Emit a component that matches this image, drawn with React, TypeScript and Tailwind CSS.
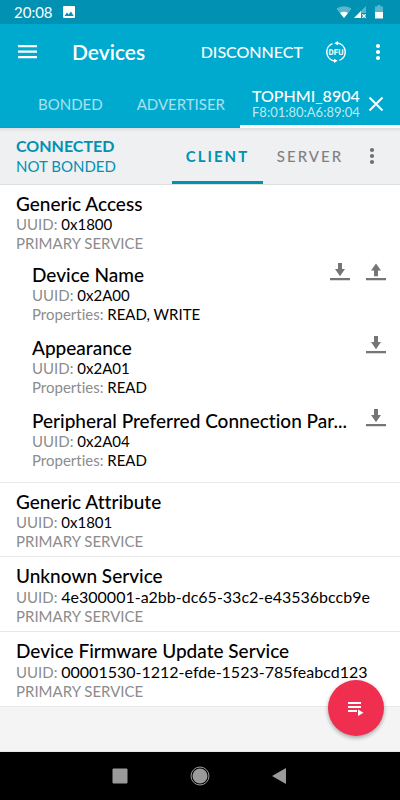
import React from "react";

type Characteristic = { name: string; uuid: string; properties: string; writable?: boolean };
type Service = { name: string; uuid: string; characteristics?: Characteristic[] };

const services: Service[] = [
  {
    name: "Generic Access",
    uuid: "0x1800",
    characteristics: [
      { name: "Device Name", uuid: "0x2A00", properties: "READ, WRITE", writable: true },
      { name: "Appearance", uuid: "0x2A01", properties: "READ" },
      { name: "Peripheral Preferred Connection Par...", uuid: "0x2A04", properties: "READ" },
    ],
  },
  { name: "Generic Attribute", uuid: "0x1801" },
  { name: "Unknown Service", uuid: "4e300001-a2bb-dc65-33c2-e43536bccb9e" },
  { name: "Device Firmware Update Service", uuid: "00001530-1212-efde-1523-785feabcd123" },
];

function DotsIcon() {
  return (
    <svg width="6" height="18" viewBox="0 0 6 18" fill="currentColor" aria-hidden="true">
      <circle cx="3" cy="3" r="2.1" />
      <circle cx="3" cy="9" r="2.1" />
      <circle cx="3" cy="15" r="2.1" />
    </svg>
  );
}

function ReadIcon() {
  return (
    <svg width="20" height="18" viewBox="0 0 20 18" fill="currentColor" aria-hidden="true">
      <path d="M8 0h4v6h3l-5 7.3L5 6h3zM0 15h20v2.2H0z" />
    </svg>
  );
}

function WriteIcon() {
  return (
    <svg width="20" height="18" viewBox="0 0 20 18" fill="currentColor" aria-hidden="true">
      <path d="M8 13.3h4V7.6h3L10 .6 5 7.6h3zM0 15h20v2.2H0z" />
    </svg>
  );
}

function StatusBar() {
  return (
    <div className="flex h-6 items-center bg-[#0091b3] pr-[17px] pl-3.5 text-white">
      <span className="text-[15px] leading-6">20:08</span>
      <svg className="ml-2.5" width="12" height="12" viewBox="0 0 12 12" aria-hidden="true">
        <rect width="12" height="12" rx="1" fill="#fff" />
        <path d="M1.5 10 4 6.6l1.6 2L8 5.5l2.7 4.5z" fill="#0091b3" />
      </svg>
      <span className="flex-1" />
      <svg width="16" height="12" viewBox="0 0 16 12" aria-hidden="true">
        <path d="M8 12 .5 2.8C4.5-.6 11.5-.6 15.5 2.8z" fill="#fff" opacity=".35" />
        <path d="M8 12 4 7c2.4-1.6 5.6-1.6 8 0z" fill="#fff" />
      </svg>
      <svg className="ml-0.5" width="13" height="13" viewBox="0 0 13 13" aria-hidden="true">
        <path d="M0 12 12 0v7H7v5z" fill="#fff" opacity=".35" />
        <path d="M0 12 7 5v7z" fill="#fff" />
        <path d="m8.3 8.3 3.4 3.6m0-3.6-3.4 3.6" stroke="#fff" strokeWidth="1.3" />
      </svg>
      <svg className="ml-2" width="8" height="14" viewBox="0 0 8 14" aria-hidden="true">
        <path d="M2.5 0h3v1.5H8V7H0V1.5h2.5z" fill="#fff" opacity=".35" />
        <path d="M0 7h8v6.5H0z" fill="#fff" />
      </svg>
    </div>
  );
}

function AppBar() {
  return (
    <header className="bg-[#00a9ce] text-white">
      <div className="flex h-14 items-center pr-[19px] pl-[18px]">
        <button type="button" aria-label="Open menu">
          <svg width="20" height="14" viewBox="0 0 20 14" fill="currentColor" aria-hidden="true">
            <path d="M0 0h19v2.3H0zM0 5.5h19v2.3H0zM0 11h19v2.3H0z" />
          </svg>
        </button>
        <h1 className="ml-[34px] flex-1 text-[21px] font-semibold">Devices</h1>
        <button type="button" className="text-base font-medium">DISCONNECT</button>
        <button type="button" aria-label="Start DFU" className="ml-[22px]">
          <svg width="22" height="22" viewBox="0 0 22 22" aria-hidden="true">
            <g fill="none" stroke="#fff" strokeWidth="1.5">
              <path d="M7.5 2.6A9 9 0 0 0 9.5 19.9" />
              <path d="M14.5 19.4A9 9 0 0 0 12.5 2.1" />
            </g>
            <path d="m9 17.8 3.8 2-3.8 2.1zM13 .1 9.2 2.2 13 4.2z" fill="#fff" />
            <text
              x="11"
              y="14"
              fill="#fff"
              fontFamily="Roboto, sans-serif"
              fontSize="8"
              fontWeight="700"
              textAnchor="middle"
              textRendering="geometricPrecision"
            >
              DFU
            </text>
          </svg>
        </button>
        <button type="button" aria-label="More options" className="ml-7">
          <DotsIcon />
        </button>
      </div>
      <nav className="flex h-12 items-stretch pl-[38px] text-[15px]">
        <button type="button" className="text-white/65">BONDED</button>
        <button type="button" className="ml-[34px] text-white/65">ADVERTISER</button>
        <div className="ml-auto flex w-40 items-center border-b-[3px] border-white pt-[3px] pr-4 pl-3">
          <button type="button" className="flex-1 text-left whitespace-nowrap">
            <span className="block text-base leading-4 font-medium">TOPHMI_8904</span>
            <span className="block text-[13px] leading-4 text-white/75">F8:01:80:A6:89:04</span>
          </button>
          <button type="button" aria-label="Close tab">
            <svg width="16" height="16" viewBox="0 0 16 16" aria-hidden="true">
              <path d="m1.5 1.5 13 13m0-13-13 13" stroke="#fff" strokeWidth="2" />
            </svg>
          </button>
        </div>
      </nav>
    </header>
  );
}

function ConnectionBar() {
  return (
    <div className="flex h-[57px] border-b border-[#dddee0] bg-linear-to-b from-[#dcdddf] to-[#eff0f2] to-[4px] pr-[25px] pl-4 shadow-[0_1px_3px_#0000001a]">
      <div className="flex-1 pt-2 text-[#0091b3]">
        <p className="text-base leading-5 font-bold">CONNECTED</p>
        <p className="text-[15px] leading-5">NOT BONDED</p>
      </div>
      <button type="button" className="w-[91px] border-b-[3px] border-[#0091b3] pt-[3px] text-[15px] font-bold tracking-[2px] text-[#0091b3]">
        CLIENT
      </button>
      <button type="button" className="w-[94px] text-[15px] font-medium tracking-[2px] text-[#808080]">SERVER</button>
      <button type="button" aria-label="Connection options" className="ml-3 text-[#707070]">
        <DotsIcon />
      </button>
    </div>
  );
}

function Detail({ label, value }: { label: string; value: string }) {
  return (
    <p className="text-[15px] leading-[19px] whitespace-nowrap text-black">
      <span className="text-[#8c8c8c]">{label}:</span>{" "}
      <span className={value.length > 12 ? "text-base leading-[19px]" : ""}>{value}</span>
    </p>
  );
}

function CharacteristicRow({ item }: { item: Characteristic }) {
  return (
    <li className="flex items-start">
      <div className="min-w-0 flex-1 pt-0.5">
        <h3 className="text-[19px] leading-[22px] font-medium whitespace-nowrap text-black">{item.name}</h3>
        <Detail label="UUID" value={item.uuid} />
        <Detail label="Properties" value={item.properties} />
      </div>
      <div className="flex gap-4 pt-px text-[#757575]">
        <button type="button" aria-label={`Read ${item.name}`}>
          <ReadIcon />
        </button>
        {item.writable && (
          <button type="button" aria-label={`Write ${item.name}`}>
            <WriteIcon />
          </button>
        )}
      </div>
    </li>
  );
}

function ServiceSection({ service }: { service: Service }) {
  return (
    <section className="border-b border-[#e8e8e8] bg-white pt-2 pr-3.5 pb-[5px] pl-4">
      <h2 className="text-[19px] leading-[22px] font-medium text-black">{service.name}</h2>
      <Detail label="UUID" value={service.uuid} />
      <p className="text-[15px] leading-[19px] text-[#8c8c8c]">PRIMARY SERVICE</p>
      {service.characteristics && (
        <ul className="flex flex-col gap-[11px] pt-[9px] pb-[7px] pl-4">
          {service.characteristics.map((item) => (
            <CharacteristicRow key={item.uuid} item={item} />
          ))}
        </ul>
      )}
    </section>
  );
}

function NavigationBar() {
  return (
    <div className="grid h-12 grid-cols-[1fr_80px_80px_80px_1fr] place-items-center bg-black">
      <button type="button" aria-label="Recent apps" className="col-start-2">
        <svg width="16" height="16" viewBox="0 0 16 16" aria-hidden="true">
          <rect x=".5" y=".5" width="15" height="15" rx="1" fill="#9a9a9a" />
        </svg>
      </button>
      <button type="button" aria-label="Home">
        <svg width="20" height="20" viewBox="0 0 20 20" aria-hidden="true">
          <circle cx="10" cy="10" r="9" fill="none" stroke="#9a9a9a" />
          <circle cx="10" cy="10" r="7.5" fill="#9a9a9a" />
        </svg>
      </button>
      <button type="button" aria-label="Back">
        <svg width="16" height="16" viewBox="0 0 16 16" aria-hidden="true">
          <path d="M14 0v16L0 8z" fill="#9a9a9a" />
        </svg>
      </button>
    </div>
  );
}

export default function App() {
  return (
    <div className="flex min-h-screen flex-col bg-[#f4f4f4] font-['Lato',sans-serif] [font-variant-ligatures:none]">
      <StatusBar />
      <AppBar />
      <ConnectionBar />
      <main className="relative flex-1 border-b border-[#e4e4e4]">
        {services.map((service) => (
          <ServiceSection key={service.uuid} service={service} />
        ))}
        <button
          type="button"
          aria-label="Macros"
          className="absolute right-4 bottom-[15px] grid size-14 place-items-center rounded-full bg-[#f02e50] shadow-[0_2px_4px_#00000055]"
        >
          <svg width="16" height="15" viewBox="0 0 16 15" fill="#fff" aria-hidden="true">
            <path d="M0 1h13v2H0zM0 5h13v2H0zM0 9h9v2H0zM10 8.5v6.5l5.500-3.200z" />
          </svg>
        </button>
      </main>
      <NavigationBar />
    </div>
  );
}
